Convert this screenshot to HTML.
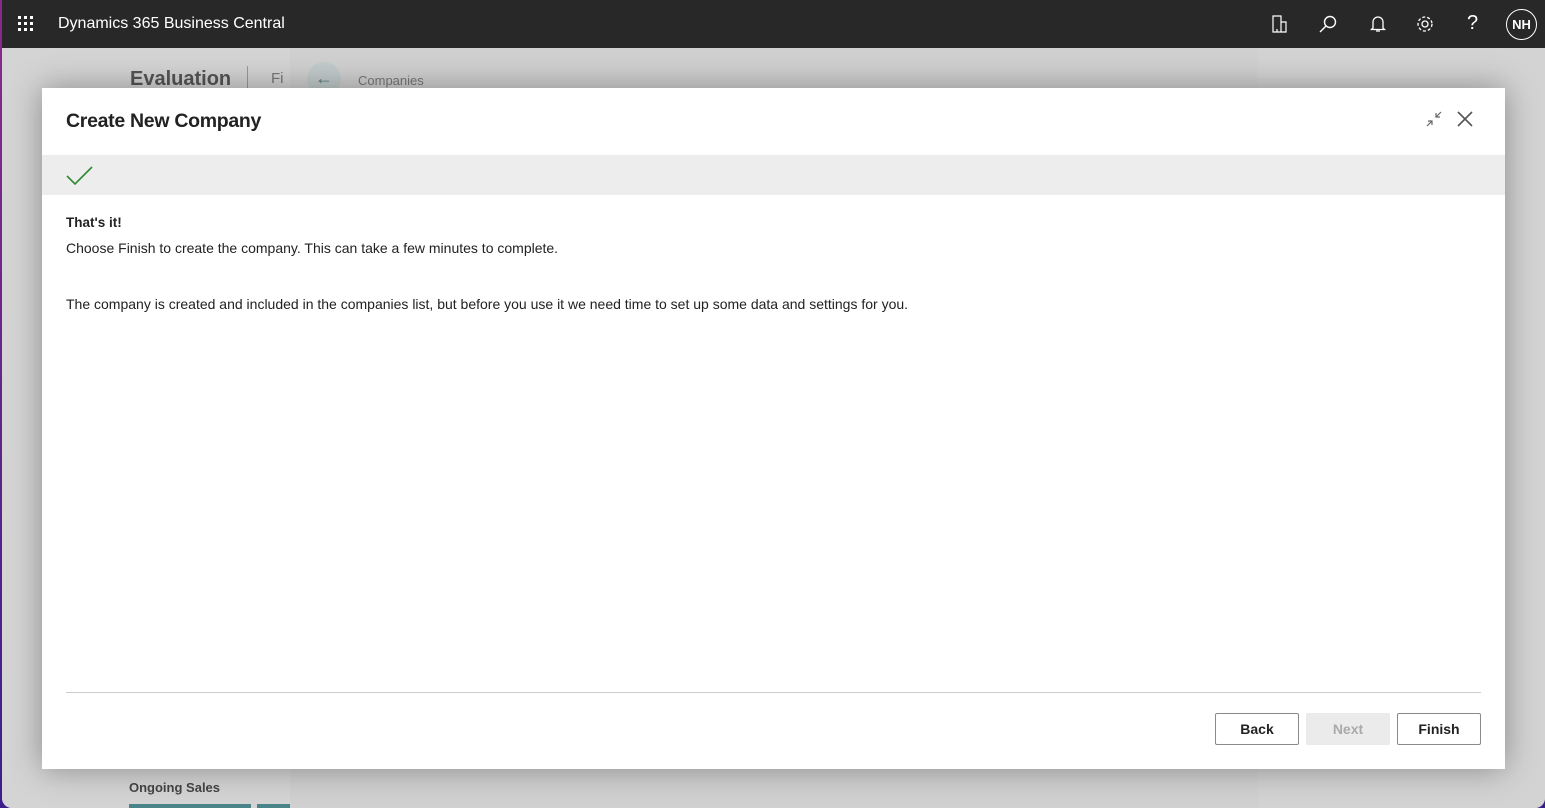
<!DOCTYPE html>
<html><head><meta charset="utf-8"><style>
*{margin:0;padding:0;box-sizing:border-box}
body{width:1545px;height:808px;overflow:hidden;position:relative;font-family:"Liberation Sans",sans-serif;background:linear-gradient(#8a2a8a,#3a1f8a)}
.win{position:absolute;left:2px;top:0;right:0;bottom:0;border-radius:0 0 10px 10px;overflow:hidden;background:#d6d6d6}
.top{position:absolute;left:0;top:0;right:0;height:48px;background:#282828;color:#fff}
.bg1{position:absolute;left:0;top:48px;width:288px;bottom:0;background:#d4d4d4}
.bg2{position:absolute;left:288px;top:48px;width:968px;bottom:0;background:#d0d0d0}
.bg3{position:absolute;left:1256px;top:48px;right:0;bottom:0;background:#d3d3d3}
.dlg{position:absolute;left:40px;top:88px;width:1463px;height:681px;background:#fff;box-shadow:0 0 30px rgba(0,0,0,.35)}
.btn{position:absolute;top:625px;height:32px;width:84px;border:1px solid #8a8a8a;border-radius:2px;font-size:14px;font-weight:bold;text-align:center;line-height:30px;color:#222}
.t{position:absolute;font-size:14px;color:#222;white-space:nowrap}
</style></head><body><div class="win">
<div class="bg1"></div><div class="bg2"></div><div class="bg3"></div>
<div style="position:absolute;left:128px;top:68px;font-size:20px;color:#555;font-weight:bold">Evaluation</div>
<div style="position:absolute;left:245px;top:66px;width:1px;height:26px;background:#999"></div>
<div style="position:absolute;left:269px;top:70px;font-size:15px;color:#777">Fi</div>
<div style="position:absolute;left:305px;top:62px;width:34px;height:34px;border-radius:50%;background:#c2cbcc;color:#5f7b80;text-align:center;line-height:32px;font-size:18px">←</div>
<div style="position:absolute;left:356px;top:73px;font-size:13px;color:#777">Companies</div>
<div style="position:absolute;left:127px;top:780px;font-size:13px;font-weight:bold;color:#444">Ongoing Sales</div>
<div style="position:absolute;left:127px;top:804px;width:122px;height:4px;background:#4a8488"></div>
<div style="position:absolute;left:255px;top:804px;width:33px;height:4px;background:#4a8488"></div>
<div class="top">
<svg style="position:absolute;left:16px;top:16px" width="16" height="16"><g fill="#fff"><rect x="0" y="0" width="3" height="3"/><rect x="6" y="0" width="3" height="3"/><rect x="12" y="0" width="3" height="3"/><rect x="0" y="6" width="3" height="3"/><rect x="6" y="6" width="3" height="3"/><rect x="12" y="6" width="3" height="3"/><rect x="0" y="12" width="3" height="3"/><rect x="6" y="12" width="3" height="3"/><rect x="12" y="12" width="3" height="3"/></g></svg>
<div style="position:absolute;left:56px;top:15px;font-size:16px">Dynamics 365 Business Central</div>
<svg style="position:absolute;left:1268px;top:14px" width="20" height="20" fill="none" stroke="#fff" stroke-width="1.2"><path d="M3 2h8v16H3z M11 8h5v10h-5 M7 18v-3"/></svg>
<svg style="position:absolute;left:1316px;top:14px" width="20" height="20" fill="none" stroke="#fff" stroke-width="1.4"><circle cx="12" cy="8" r="5.5"/><path d="M8 12l-6 6"/></svg>
<svg style="position:absolute;left:1366px;top:14px" width="20" height="20" fill="none" stroke="#fff" stroke-width="1.3"><path d="M5 14V8a5 5 0 0110 0v6l1.5 1.5h-13z M8 17h4"/></svg>
<svg style="position:absolute;left:1413px;top:14px" width="20" height="20" fill="none" stroke="#fff" stroke-width="1.3"><circle cx="10" cy="10" r="3"/><circle cx="10" cy="10" r="7" stroke-dasharray="3 2"/></svg>
<div style="position:absolute;left:1465px;top:12px;font-size:20px">?</div>
<div style="position:absolute;left:1504px;top:9px;width:31px;height:31px;border:1px solid #fff;border-radius:50%;font-size:13px;font-weight:bold;text-align:center;line-height:29px">NH</div>
</div>
<div class="dlg">
<div style="position:absolute;left:24px;top:22px;font-size:19.5px;color:#222;font-weight:bold;letter-spacing:-.3px">Create New Company</div>
<svg style="position:absolute;left:1383px;top:22px" width="18" height="18" fill="none" stroke="#666" stroke-width="1.2"><path d="M2 16l5-5M3 11h4v4 M16 2l-5 5M11 3v4h4"/></svg>
<svg style="position:absolute;left:1414px;top:22px" width="18" height="18" fill="none" stroke="#555" stroke-width="1.6"><path d="M2 2l14 14M16 2L2 16"/></svg>
<div style="position:absolute;left:0;top:67px;width:100%;height:40px;background:#ededed"></div>
<svg style="position:absolute;left:24px;top:78px" width="28" height="20" fill="none" stroke="#2f8a2f" stroke-width="1.6"><path d="M1 10l8 8L26 1"/></svg>
<div class="t" style="left:24px;top:127px;font-weight:bold;font-size:13.5px">That's it!</div>
<div class="t" style="left:24px;top:152px">Choose Finish to create the company. This can take a few minutes to complete.</div>
<div class="t" style="left:24px;top:208px">The company is created and included in the companies list, but before you use it we need time to set up some data and settings for you.</div>
<div style="position:absolute;left:24px;top:604px;width:1415px;height:1px;background:#ccc"></div>
<div class="btn" style="left:1173px">Back</div>
<div class="btn" style="left:1264px;border-color:#ebebeb;background:#ebebeb;color:#aaa">Next</div>
<div class="btn" style="left:1355px">Finish</div>
</div>
</div></body></html>
